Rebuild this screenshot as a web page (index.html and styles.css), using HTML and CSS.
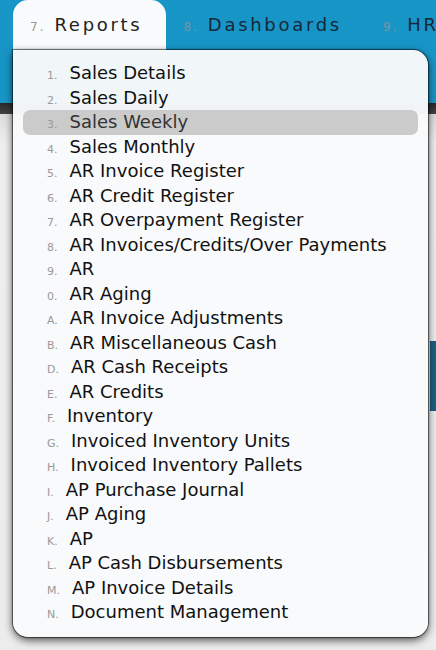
FILE: index.html
```html
<!DOCTYPE html>
<html lang="en">
<head>
  <meta charset="UTF-8" />
  <meta name="viewport" content="width=device-width, initial-scale=1.0"/>
  <title>Reports</title>
  <link rel="stylesheet" href="styles.css">
</head>
<body>
  <header class="topbar">
    <nav class="tabs">
      <a class="tab active" href="#"><span class="key">7.</span>Reports</a>
      <a class="tab" href="#"><span class="key">8.</span>Dashboards</a>
      <a class="tab" href="#"><span class="key">9.</span>HR</a>
    </nav>
  </header>
  <div class="strip"></div>
  <main class="content">
    <div class="side-block"></div>
  </main>

  <ul class="menu">
    <li><span class="key">1.</span>Sales Details</li>
    <li><span class="key">2.</span>Sales Daily</li>
    <li class="hover"><span class="key">3.</span>Sales Weekly</li>
    <li><span class="key">4.</span>Sales Monthly</li>
    <li><span class="key">5.</span>AR Invoice Register</li>
    <li><span class="key">6.</span>AR Credit Register</li>
    <li><span class="key">7.</span>AR Overpayment Register</li>
    <li><span class="key">8.</span>AR Invoices/Credits/Over Payments</li>
    <li><span class="key">9.</span>AR</li>
    <li><span class="key">0.</span>AR Aging</li>
    <li><span class="key">A.</span>AR Invoice Adjustments</li>
    <li><span class="key">B.</span>AR Miscellaneous Cash</li>
    <li><span class="key">D.</span>AR Cash Receipts</li>
    <li><span class="key">E.</span>AR Credits</li>
    <li><span class="key">F.</span>Inventory</li>
    <li><span class="key">G.</span>Invoiced Inventory Units</li>
    <li><span class="key">H.</span>Invoiced Inventory Pallets</li>
    <li><span class="key">I.</span>AP Purchase Journal</li>
    <li><span class="key">J.</span>AP Aging</li>
    <li><span class="key">K.</span>AP</li>
    <li><span class="key">L.</span>AP Cash Disbursements</li>
    <li><span class="key">M.</span>AP Invoice Details</li>
    <li><span class="key">N.</span>Document Management</li>
  </ul>
</body>
</html>
```

FILE: styles.css
```css
* {
  box-sizing: border-box;
  margin: 0;
  padding: 0;
}

body {
  font-family: 'DejaVu Sans', Verdana, sans-serif;
  background: #e9e9e9;
  color: #111;
  height: 650px;
  overflow: hidden;
  position: relative;
}

.topbar {
  background: #1895c7;
  height: 103px;
  overflow: hidden;
}

.tabs {
  display: flex;
  padding-left: 13px;
  white-space: nowrap;
}

.tab {
  display: flex;
  align-items: baseline;
  height: 50px;
  padding: 14px 24px 0 17px;
  font-size: 18px;
  letter-spacing: 2.7px;
  color: #16283a;
  text-decoration: none;
  border-radius: 15px 15px 0 0;
}

.tab.active {
  background: #fafbfc;
  color: #222;
}

.tab .key {
  font-size: 12px;
  letter-spacing: 2px;
  color: #7f93a2;
  margin-right: 9px;
}

.tab.active .key {
  color: #999;
}

.strip {
  height: 11px;
  background: linear-gradient(#2a2a2a, #444);
}

.content {
  height: 536px;
  background: linear-gradient(#dcdcdc, #efefef 30px, #ececec);
  display: flex;
  justify-content: flex-end;
  padding-top: 227px;
}

.side-block {
  width: 6px;
  height: 70px;
  background: #1c5f7d;
}

/* dropdown */
.menu {
  position: absolute;
  top: 50px;
  left: 13px;
  width: 415px;
  list-style: none;
  padding: 11px 10px 12px;
  background: rgba(249, 250, 251, 0.97);
  border-radius: 0 15px 15px 15px;
  box-shadow: 0 0 1px 1px rgba(0, 0, 0, 0.55), 0 3px 9px rgba(0, 0, 0, 0.7);
}

.menu li {
  display: flex;
  align-items: baseline;
  height: 24.5px;
  line-height: 24.5px;
  padding-left: 24px;
  font-size: 18px;
  border-radius: 7px;
  white-space: nowrap;
}

.menu li.hover {
  background: #cbcbcb;
  color: #333;
}

.menu .key {
  font-size: 11px;
  color: #999;
  margin-right: 12px;
}
```
